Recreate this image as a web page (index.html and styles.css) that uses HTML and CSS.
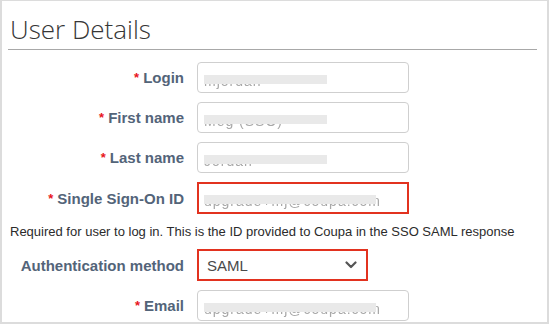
FILE: index.html
```html
<!DOCTYPE html>
<html lang="en">
<head>
    <meta charset="UTF-8">
    <meta name="viewport" content="width=device-width, initial-scale=1.0">
    <title>User Details</title>
    <link rel="stylesheet" href="styles.css">
</head>
<body>
    <div class="panel">
        <h1 class="panel-title">User Details</h1>

        <form class="user-form">
            <label class="form-label" for="login"><span class="req">*</span>Login</label>
            <div class="form-control"><span class="redact redact-short">mjordan</span></div>

            <label class="form-label" for="first-name"><span class="req">*</span>First name</label>
            <div class="form-control"><span class="redact redact-short">Meg (SSO)</span></div>

            <label class="form-label" for="last-name"><span class="req">*</span>Last name</label>
            <div class="form-control"><span class="redact redact-short">Jordan</span></div>

            <label class="form-label" for="sso-id"><span class="req">*</span>Single Sign-On ID</label>
            <div class="form-control highlight"><span class="redact redact-long">upgrade+mj@coupa.com</span></div>

            <div class="form-help">Required for user to log in. This is the ID provided to Coupa in the SSO SAML response</div>

            <label class="form-label" for="auth-method">Authentication method</label>
            <div class="form-select highlight">
                <span>SAML</span>
                <svg class="chevron" width="12" height="8" viewBox="0 0 12 8">
                    <path d="M1.5 1.5 L6 6 L10.5 1.5" fill="none" stroke="#555" stroke-width="2.2" stroke-linecap="round" stroke-linejoin="round"/>
                </svg>
            </div>

            <label class="form-label" for="email"><span class="req">*</span>Email</label>
            <div class="form-control"><span class="redact redact-long">upgrade+mj@coupa.com</span></div>
        </form>
    </div>
</body>
</html>
```

FILE: styles.css
```css
body {
    margin: 0;
    padding: 0;
    background-color: white;
    font-family: 'Liberation Sans', Arial, sans-serif;
}

.panel {
    box-sizing: border-box;
    width: 549px;
    height: 324px;
    border: 2px solid #dcdcdc;
    border-top-width: 1px;
    padding: 0 10px 0 6px;
    overflow: hidden;
}

.panel-title {
    margin: 0;
    padding: 13px 0 4px 2px;
    font-family: 'Open Sans', sans-serif;
    font-weight: 300;
    font-size: 26px;
    line-height: 31px;
    color: #363636;
    border-bottom: 1px solid #a8a8a8;
}

.user-form {
    display: grid;
    grid-template-columns: 176px 212px;
    column-gap: 13px;
    row-gap: 9px;
    align-items: center;
    padding-top: 12px;
}

.form-label {
    text-align: right;
    font-weight: bold;
    font-size: 15px;
    color: #536479;
}

.req {
    color: #e8141b;
    font-size: 13px;
    margin-right: 4px;
    vertical-align: 1px;
}

.form-control {
    box-sizing: border-box;
    height: 31px;
    border: 1px solid #cfcfcf;
    border-radius: 4px;
    padding: 0 6px;
    display: flex;
    align-items: center;
}

.form-control.highlight {
    height: 32px;
    border: 2px solid #e2321f;
    border-radius: 0;
    padding: 0 5px;
}

.redact {
    position: relative;
    display: inline-block;
    font-size: 14px;
    letter-spacing: 1px;
    color: #a8a8a8;
    filter: blur(0.6px);
    line-height: 14px;
    margin-top: 6px;
}

.redact::after {
    content: '';
    position: absolute;
    left: 0;
    top: 1px;
    height: 9px;
    background-color: #e9e9e9;
}

.redact-short::after {
    width: 123px;
}

.redact-long::after {
    width: 172px;
}

.form-help {
    grid-column: 1 / -1;
    margin: 0 0 0 2px;
    font-size: 13px;
    color: #2b2b2b;
    white-space: nowrap;
    padding: 1px 0;
}

.form-select {
    box-sizing: border-box;
    width: 171px;
    height: 32px;
    border: 2px solid #e2321f;
    padding: 0 8px 0 8px;
    display: flex;
    justify-content: space-between;
    align-items: center;
    font-size: 15px;
    color: #4a4a4a;
}

.chevron {
    margin-right: 1px;
}
```
